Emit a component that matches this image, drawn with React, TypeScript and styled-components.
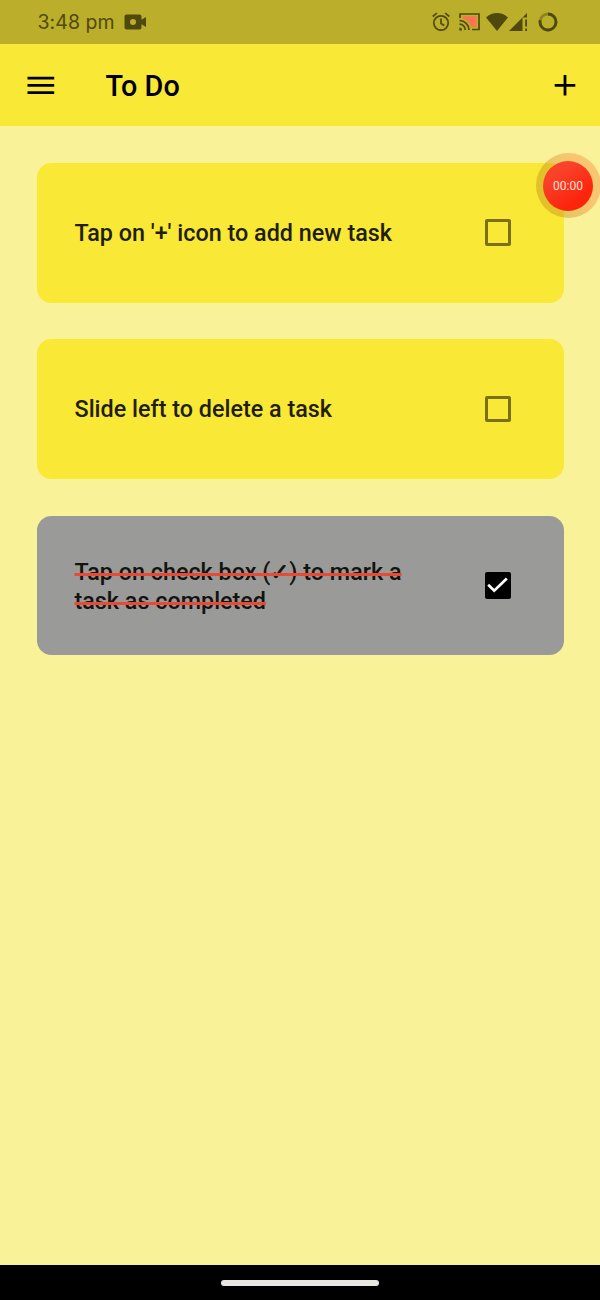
import React from 'react';
import styled, { createGlobalStyle } from 'styled-components';

const GlobalStyle = createGlobalStyle`
  * { box-sizing: border-box; }
  body { margin: 0; background: #faf298; font-family: Roboto, "Liberation Sans", sans-serif; }
`;

const Screen = styled.div`
  position: relative;
  display: flex;
  flex-direction: column;
  width: 600px;
  height: 1300px;
  overflow: hidden;
  background: #faf298;
`;

const StatusBar = styled.header`
  display: flex;
  align-items: center;
  height: 44px;
  padding: 0 42px 0 37.5px;
  background: #bbae2a;
  color: #50490d;
`;

const Clock = styled.span`
  width: 86px;
  font-family: Inter, Roboto, sans-serif;
  font-size: 19.5px;
  line-height: 44px;
  letter-spacing: 0.05px;
  white-space: nowrap;
`;

const StatusIcons = styled.div`
  display: flex;
  align-items: center;
  margin-left: auto;
`;

const Glyph = styled.svg<{ $gap?: number }>`
  display: block;
  flex: none;
  margin-left: ${({ $gap = 0 }) => $gap}px;
`;

const AppBar = styled.div`
  display: flex;
  align-items: center;
  height: 82px;
  padding: 0 24px 0 27px;
  background: #fae836;
  color: #000;
`;

const IconButton = styled.button`
  display: flex;
  padding: 0;
  border: 0;
  background: none;
  color: inherit;
`;

const Title = styled.h1`
  margin: 2px auto 0 50.5px;
  font-size: 28.8px;
  font-weight: 500;
  line-height: 36px;
`;

const TaskList = styled.ul`
  display: flex;
  flex: 1;
  flex-direction: column;
  gap: 36.6px;
  margin: 0;
  padding: 36.8px 36.5px 0;
  list-style: none;
`;

const Card = styled.li<{ $done: boolean }>`
  display: flex;
  align-items: center;
  justify-content: space-between;
  height: 139.8px;
  padding: 0 52.3px 0 38px;
  border-radius: 14.5px;
  background: ${({ $done }) => ($done ? '#9a9b98' : '#fae836')};
`;

const TaskText = styled.div<{ $done: boolean }>`
  width: 345px;
  padding-top: ${({ $done }) => ($done ? 3.6 : 1.5)}px;
  color: ${({ $done }) => ($done ? '#14130f' : '#211e08')};
  font-size: 23.35px;
  font-weight: 500;
  line-height: 29.3px;
`;

const Strike = styled.span`
  font-size: 26.6px;
  line-height: 1;
  text-decoration: line-through #ea4936 3px;
`;

const StruckWords = styled.span`
  font-size: 23.35px;
  line-height: 1;
`;

const CheckMark = styled.span`
  -webkit-text-stroke: 0.8px currentColor;
`;

const Checkbox = styled.span<{ $done: boolean }>`
  display: flex;
  align-items: center;
  justify-content: center;
  width: 26.6px;
  height: 26.6px;
  border: 3px solid ${({ $done }) => ($done ? '#000' : '#7b7018')};
  border-radius: 2px;
  background: ${({ $done }) => ($done ? '#000' : 'transparent')};
`;

const RecordBubble = styled.div`
  position: absolute;
  top: 153px;
  left: 535.5px;
  display: flex;
  align-items: center;
  justify-content: center;
  width: 65px;
  height: 65px;
  border-radius: 50%;
  background: linear-gradient(65deg, rgba(190, 140, 20, 0.42) 30%, rgba(250, 125, 50, 0.38) 70%);
`;

const RecordTime = styled.span`
  width: 50px;
  height: 50px;
  border-radius: 50%;
  background: linear-gradient(145deg, #f8432a 25%, #fd240c 75%);
  color: #ffe2d5;
  font-size: 12px;
  line-height: 50px;
  text-align: center;
`;

const NavBar = styled.footer`
  display: flex;
  align-items: center;
  justify-content: center;
  height: 35px;
  background: #000;
`;

const Handle = styled.span`
  width: 158px;
  height: 6px;
  border-radius: 3px;
  background: #e9e7e2;
`;

const tasks = [
  { id: 1, text: "Tap on '+' icon to add new task", done: false },
  { id: 2, text: 'Slide left to delete a task', done: false },
  {
    id: 3,
    text: (
      <>
        Tap on check box (<CheckMark>✓</CheckMark>) to mark a
        <br />
        task as completed
      </>
    ),
    done: true,
  },
];

export default function App() {
  return (
    <Screen>
      <GlobalStyle />
      <StatusBar>
        <Clock>3:48 pm</Clock>
        <Glyph width="22" height="16" viewBox="0 0 22 16" fill="currentColor">
          <path fillRule="evenodd" d="M2.5 .5h13a2 2 0 0 1 2 2v3.300L22 3v10l-4.500-2.800v3.300a2 2 0 0 1-2 2h-13a2 2 0 0 1-2-2v-11a2 2 0 0 1 2-2ZM9 5a3 3 0 1 0 0 6 3 3 0 0 0 0-6Z" />
        </Glyph>
        <StatusIcons>
          <Glyph width="18" height="20" viewBox="0 0 18 20" fill="none" stroke="currentColor" strokeWidth="1.700">
            <circle cx="9" cy="11" r="7.200" />
            <path d="M9 6.500v5l3.300 2M.7 4.500 4.800 1.200M17.300 4.500l-4.100-3.300" />
          </Glyph>
          <Glyph $gap={9.5} width="21" height="18" viewBox="0 0 21 18" fill="none" stroke="currentColor" strokeWidth="1.700">
            <path d="M4 3.300h13.500v10.500h-5.500C11 10 8.500 6.500 4 5.500Z" fill="#fb7350" stroke="none" />
            <path d="M1 5V1h19v15.500h-7M.5 7.500a9.500 9.500 0 0 1 9.500 9.500M.5 11.200A5.800 5.800 0 0 1 6.300 17" />
            <path d="M.3 14.500A2.700 2.700 0 0 1 3 17.400H.3Z" fill="currentColor" stroke="none" />
          </Glyph>
          <Glyph $gap={5.5} width="22" height="18" viewBox="0 0 22 18" fill="currentColor">
            <path d="M0 4.500C6.500-1.400 15.500-1.400 22 4.500L11 18Z" />
          </Glyph>
          <Glyph $gap={1.5} width="19" height="18" viewBox="0 0 19 18" fill="currentColor">
            <path d="M0 18 18 0v4.500h-4.500V18ZM16.200 6.500H18v7h-1.800ZM16.200 15.500H18V18h-1.800Z" />
          </Glyph>
          <Glyph $gap={10} width="20" height="20" viewBox="0 0 20 20" fill="none" strokeWidth="2.800">
            <circle cx="10" cy="10" r="8" stroke="#8f8520" />
            <path d="M10 2a8 8 0 1 1-7.800 6.200" stroke="currentColor" />
          </Glyph>
        </StatusIcons>
      </StatusBar>
      <AppBar>
        <IconButton aria-label="Menu">
          <Glyph width="28" height="20" viewBox="0 0 28 20" fill="currentColor">
            <path d="M.5 1.700h26.700v2.700H.5ZM.5 9h26.700v2.700H.5ZM.5 16.300h26.700V19H.5Z" />
          </Glyph>
        </IconButton>
        <Title>To Do</Title>
        <IconButton aria-label="Add task">
          <Glyph width="22" height="22" viewBox="0 0 22 22" stroke="currentColor" strokeWidth="2.800">
            <path d="M11 1v20.600M.7 11.300h20.600" />
          </Glyph>
        </IconButton>
      </AppBar>
      <TaskList>
        {tasks.map(({ id, text, done }) => (
          <Card key={id} $done={done}>
            <TaskText $done={done}>
              {done ? (
                <Strike>
                  <StruckWords>{text}</StruckWords>
                </Strike>
              ) : (
                text
              )}
            </TaskText>
            <Checkbox $done={done} role="checkbox" aria-checked={done}>
              {done && (
                <Glyph width="21" height="16" viewBox="0 0 21 16" fill="none" stroke="#fff" strokeWidth="2.700">
                  <path d="m1.200 7.700 6 6L19.800 1.500" />
                </Glyph>
              )}
            </Checkbox>
          </Card>
        ))}
      </TaskList>
      <NavBar>
        <Handle />
      </NavBar>
      <RecordBubble>
        <RecordTime>00:00</RecordTime>
      </RecordBubble>
    </Screen>
  );
}
